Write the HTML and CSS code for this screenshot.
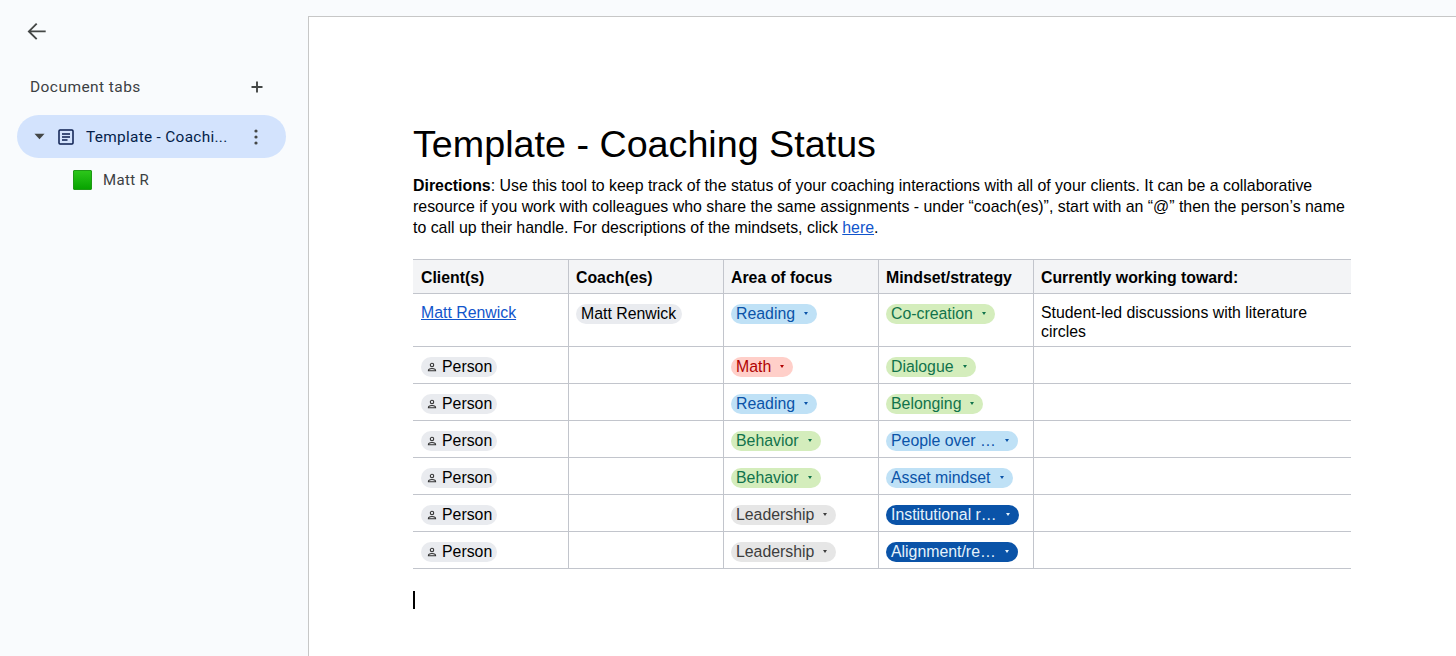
FILE: index.html
```html
<!DOCTYPE html>
<html lang="en">
<head>
<meta charset="utf-8">
<title>Template - Coaching Status</title>
<link rel="stylesheet" href="styles.css">
</head>
<body>
<aside class="sidebar">
  <button class="back" aria-label="Back">
    <svg width="24" height="24" viewBox="0 0 24 24"><path d="M20.7 12.4H4.5M11.7 4.6l-7.8 7.8 7.8 7.8" fill="none" stroke="#444746" stroke-width="1.9"/></svg>
  </button>
  <div class="tabs-head">
    <span>Document tabs</span>
    <svg width="12" height="12" viewBox="0 0 12 12"><path d="M6 .5v11M.5 6h11" stroke="#444746" stroke-width="1.9"/></svg>
  </div>
  <div class="tab-active">
    <svg class="caret" width="11" height="7" viewBox="0 0 12 7"><path d="M.5.5h11L6 6.5z" fill="#444746"/></svg>
    <svg class="doc" width="16" height="16" viewBox="0 0 16 16"><rect x="1" y="1" width="14" height="14" rx="1" fill="none" stroke="#0b1e4f" stroke-width="1.5"/><path d="M4 5h8M4 8h8M4 11h5.5" stroke="#0b1e4f" stroke-width="1.4"/></svg>
    <span class="tab-name">Template - Coachi...</span>
    <svg class="dots" width="4" height="16" viewBox="0 0 4 16"><circle cx="2" cy="2" r="1.6"/><circle cx="2" cy="8" r="1.6"/><circle cx="2" cy="14" r="1.6"/></svg>
  </div>
  <div class="tab-child">
    <span class="green-square"></span>
    <span>Matt R</span>
  </div>
</aside>
<main class="page">
  <h1>Template - Coaching Status</h1>
  <p class="directions"><b>Directions</b>: Use this tool to keep track of the status of your coaching interactions with all of your clients. It can be a collaborative resource if you work with colleagues who share the same assignments - under “coach(es)”, start with an “@” then the person’s name to call up their handle. For descriptions of the mindsets, click <a href="#">here</a>.</p>
  <table>
    <colgroup><col class="c1"><col class="c2"><col class="c3"><col class="c4"><col class="c5"></colgroup>
    <thead>
      <tr><th>Client(s)</th><th>Coach(es)</th><th>Area of focus</th><th>Mindset/strategy</th><th>Currently working toward:</th></tr>
    </thead>
    <tbody>
      <tr class="tall">
        <td><a href="#">Matt Renwick</a></td>
        <td><span class="chip person named">Matt Renwick</span></td>
        <td><span class="chip blue">Reading<i></i></span></td>
        <td><span class="chip green">Co-creation<i></i></span></td>
        <td>Student-led discussions with literature circles</td>
      </tr>
      <tr>
        <td><span class="chip person placeholder"><svg width="10" height="10" viewBox="0 0 10 10"><circle cx="5" cy="3" r="1.7" fill="none" stroke="#333" stroke-width="1.1"/><path d="M1.4 8.8c0-1.7 1.6-2.3 3.6-2.3s3.6.6 3.6 2.3z" fill="none" stroke="#333" stroke-width="1.1"/></svg>Person</span></td>
        <td></td>
        <td><span class="chip red">Math<i></i></span></td>
        <td><span class="chip green">Dialogue<i></i></span></td>
        <td></td>
      </tr>
      <tr>
        <td><span class="chip person placeholder"><svg width="10" height="10" viewBox="0 0 10 10"><circle cx="5" cy="3" r="1.7" fill="none" stroke="#333" stroke-width="1.1"/><path d="M1.4 8.8c0-1.7 1.6-2.3 3.6-2.3s3.6.6 3.6 2.3z" fill="none" stroke="#333" stroke-width="1.1"/></svg>Person</span></td>
        <td></td>
        <td><span class="chip blue">Reading<i></i></span></td>
        <td><span class="chip green">Belonging<i></i></span></td>
        <td></td>
      </tr>
      <tr>
        <td><span class="chip person placeholder"><svg width="10" height="10" viewBox="0 0 10 10"><circle cx="5" cy="3" r="1.7" fill="none" stroke="#333" stroke-width="1.1"/><path d="M1.4 8.8c0-1.7 1.6-2.3 3.6-2.3s3.6.6 3.6 2.3z" fill="none" stroke="#333" stroke-width="1.1"/></svg>Person</span></td>
        <td></td>
        <td><span class="chip green">Behavior<i></i></span></td>
        <td><span class="chip blue">People over …<i></i></span></td>
        <td></td>
      </tr>
      <tr>
        <td><span class="chip person placeholder"><svg width="10" height="10" viewBox="0 0 10 10"><circle cx="5" cy="3" r="1.7" fill="none" stroke="#333" stroke-width="1.1"/><path d="M1.4 8.8c0-1.7 1.6-2.3 3.6-2.3s3.6.6 3.6 2.3z" fill="none" stroke="#333" stroke-width="1.1"/></svg>Person</span></td>
        <td></td>
        <td><span class="chip green">Behavior<i></i></span></td>
        <td><span class="chip blue">Asset mindset<i></i></span></td>
        <td></td>
      </tr>
      <tr>
        <td><span class="chip person placeholder"><svg width="10" height="10" viewBox="0 0 10 10"><circle cx="5" cy="3" r="1.7" fill="none" stroke="#333" stroke-width="1.1"/><path d="M1.4 8.8c0-1.7 1.6-2.3 3.6-2.3s3.6.6 3.6 2.3z" fill="none" stroke="#333" stroke-width="1.1"/></svg>Person</span></td>
        <td></td>
        <td><span class="chip grey">Leadership<i></i></span></td>
        <td><span class="chip navy">Institutional r…<i></i></span></td>
        <td></td>
      </tr>
      <tr>
        <td><span class="chip person placeholder"><svg width="10" height="10" viewBox="0 0 10 10"><circle cx="5" cy="3" r="1.7" fill="none" stroke="#333" stroke-width="1.1"/><path d="M1.4 8.8c0-1.7 1.6-2.3 3.6-2.3s3.6.6 3.6 2.3z" fill="none" stroke="#333" stroke-width="1.1"/></svg>Person</span></td>
        <td></td>
        <td><span class="chip grey">Leadership<i></i></span></td>
        <td><span class="chip navy">Alignment/re…<i></i></span></td>
        <td></td>
      </tr>
    </tbody>
  </table>
  <div class="cursor"></div>
</main>
</body>
</html>
```
FILE: styles.css
```css
* { box-sizing: border-box; }
html, body { height: 100%; }
body {
  margin: 0;
  display: flex;
  background: #f9fbfd;
  overflow: hidden;
  font-family: "Liberation Sans", Arial, sans-serif;
  color: #000;
}
.sidebar {
  flex: 0 0 308px;
  font-family: Roboto, "Noto Sans", sans-serif;
  color: #3c4043;
  padding: 19px 22px 0 17px;
}
.back {
  display: block;
  margin: 0 0 0 8px;
  padding: 0;
  width: 24px;
  height: 24px;
  border: 0;
  background: none;
}
.tabs-head {
  display: flex;
  align-items: center;
  justify-content: space-between;
  margin-top: 34px;
  padding: 0 23px 0 13px;
  height: 20px;
  font-size: 15.5px;
  letter-spacing: .43px;
}
.tab-active {
  display: flex;
  align-items: center;
  height: 43px;
  margin-top: 18px;
  padding: 0 28px 0 17px;
  border-radius: 22px;
  background: #d3e3fd;
  color: #041e49;
  font-size: 15.4px;
  letter-spacing: .3px;
}
.doc { margin-left: 12.5px; }
.tab-name { margin-left: 12.5px; flex: 1; font-weight: 450; white-space: nowrap; }
.dots { fill: #444746; }
.tab-child {
  display: flex;
  align-items: center;
  height: 20px;
  margin: 12px 0 0 56px;
  font-size: 15px;
  letter-spacing: .35px;
}
.green-square {
  width: 19px;
  height: 20px;
  margin-right: 11px;
  border-radius: 1px;
  background: linear-gradient(#2cc61a, #07a300);
  border: 1px solid #1f9a16;
}
.page {
  flex: 1;
  margin-top: 16px;
  padding: 106px 105px 0 104px;
  background: #fff;
  border: 1px solid #c7c7c7;
  border-right: 0;
  border-bottom: 0;
  min-width: 0;
}
h1 {
  margin: 0;
  font-size: 37.7px;
  font-weight: 400;
  line-height: 42px;
}
.directions {
  margin: 10px 0 0;
  font-size: 15.9px;
  line-height: 21px;
}
a { color: #1155cc; text-decoration: underline; }
table {
  width: 938px;
  margin-top: 21px;
  border-collapse: collapse;
  table-layout: fixed;
  font-size: 15.85px;
}
.c1, .c2, .c3, .c4 { width: 155px; }
th, td {
  border: 1px solid #c2c5cc;
  padding: 9px 7.5px 5px;
  vertical-align: top;
  text-align: left;
  line-height: 19px;
}
th:first-child, td:first-child { border-left: 0; padding-left: 8px; }
th:last-child, td:last-child { border-right: 0; }
th { background: #f3f4f6; padding-top: 7.5px; padding-bottom: 6px; font-weight: 700; }
.chip {
  display: inline-flex;
  align-items: center;
  height: 20px;
  margin: 1px 0;
  padding: 0 5px;
  border-radius: 10px;
  white-space: nowrap;
  vertical-align: top;
}
.chip i {
  width: 0;
  height: 0;
  margin: 0 4px 0 9px;
  border: 2.5px solid transparent;
  border-top: 3px solid currentColor;
  border-bottom: 0;
}
.person { background: #e9ebef; }
.named { padding-right: 6px; }
.placeholder { gap: 5px; padding-left: 6px; }
.blue { background: #bfe1f6; color: #0a53a8; }
.green { background: #d4edbc; color: #11734b; }
.red { background: #ffcfc9; color: #b10202; }
.grey { background: #e6e6e6; color: #3d3d3d; }
.navy { background: #0a53a8; color: #e5f2fb; }
.cursor {
  width: 2px;
  height: 18px;
  margin-top: 22px;
  background: #000;
}
```
